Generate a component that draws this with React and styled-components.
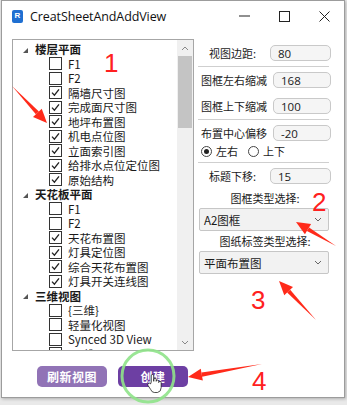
import styled, { createGlobalStyle } from 'styled-components'

const GlobalStyle = createGlobalStyle`
  html, body {
    margin: 0;
    padding: 0;
    background: #e9e9e9;
  }
  #root {
    width: 347px;
    height: 405px;
    position: relative;
    overflow: hidden;
  }
`

const CJK = `"Noto Sans CJK SC", "Noto Sans", sans-serif`

const Window = styled.div`
  position: relative;
  margin-left: 1px;
  width: 342px;
  height: 396px;
  background: #ffffff;
  border: 1px solid #9c9c9c;
  box-shadow: 1px 1px 3px rgba(0, 0, 0, 0.25);
  display: flex;
  flex-direction: column;
  font-family: ${CJK};
  color: #1a1a1a;
`

const TitleBar = styled.div`
  height: 30px;
  display: flex;
  align-items: center;
  padding-left: 10px;
  gap: 7px;
`

const AppIcon = styled.div`
  width: 11px;
  height: 13px;
  border-radius: 2px;
  background: #1f6fd1;
  color: white;
  font: bold 8px "Liberation Sans", sans-serif;
  display: flex;
  align-items: flex-start;
  justify-content: center;
  padding-top: 1px;
  box-sizing: border-box;
`

const Title = styled.div`
  font-family: "Open Sans", "Noto Sans", sans-serif;
  font-size: 12.5px;
  color: #111;
  flex: 1;
  letter-spacing: -0.1px;
`

const Controls = styled.div`
  display: flex;
  align-items: center;
`

const Ctl = styled.div`
  width: 40px;
  height: 30px;
  display: flex;
  align-items: center;
  justify-content: center;
`

const Body = styled.div`
  display: flex;
  padding: 8px 0 0 10px;
  gap: 3px;
`

const LeftCol = styled.div`
  display: flex;
  flex-direction: column;
`

const Tree = styled.div`
  width: 180px;
  height: 310px;
  border: 1px solid #a6a6a6;
  display: flex;
  overflow: hidden;
`

const TreeList = styled.div`
  flex: 1;
  padding-top: 2px;
  overflow: hidden;
`

const Row = styled.div`
  height: 14.5px;
  display: flex;
  align-items: center;
  font-size: 11.5px;
  white-space: nowrap;
  padding-left: ${p => (p.$group ? 10 : 36)}px;
  font-weight: ${p => (p.$group ? 700 : 400)};
  gap: ${p => (p.$group ? 7 : 6)}px;
`

const Expander = styled.span`
  width: 0;
  height: 0;
  border-left: 5px solid transparent;
  border-bottom: 5px solid #555;
  margin-top: 2px;
`

const Box = styled.span`
  width: 11px;
  height: 11px;
  border: 1px solid #333;
  background: #fff;
  display: flex;
  align-items: center;
  justify-content: center;
  flex: none;
`

const Scrollbar = styled.div`
  width: 16px;
  background: #f0f0f0;
  display: flex;
  flex-direction: column;
  align-items: center;
`

const Arrow = styled.div`
  height: 16px;
  display: flex;
  align-items: center;
  justify-content: center;
`

const Thumb = styled.div`
  width: 14px;
  height: 72px;
  background: #c4c4c4;
`

const Track = styled.div`
  flex: 1;
`

const ButtonRow = styled.div`
  display: flex;
  gap: 11px;
  padding-left: 25px;
  margin-top: 15px;
`

const Button = styled.div`
  width: 70px;
  height: 21px;
  border-radius: 5px;
  background: ${p => (p.$primary ? '#6d3fa3' : '#9173b6')};
  color: #fff;
  font-size: 12px;
  font-weight: 700;
  display: flex;
  align-items: center;
  justify-content: center;
  letter-spacing: 0.5px;
`

const RightCol = styled.div`
  width: 136px;
  display: flex;
  flex-direction: column;
  padding-top: 1px;
`

const Field = styled.div`
  display: flex;
  align-items: center;
  height: 26px;
  padding-left: ${p => p.$indent || 4}px;
  gap: ${p => p.$gap || 6}px;
`

const Label = styled.span`
  font-size: 11px;
  white-space: nowrap;
`

const Input = styled.div`
  margin-left: auto;
  width: 61px;
  height: 16px;
  border: 1px solid #c9c9c9;
  border-radius: 5px;
  background: #f5f5f5;
  font-family: "Open Sans", "Noto Sans", sans-serif;
  font-size: 11.5px;
  display: flex;
  align-items: center;
  padding-left: 7px;
  box-sizing: border-box;
  margin-right: 2px;
`

const Separator = styled.div`
  height: 1px;
  background: #cfcfcf;
  margin: 0 4px 0 1px;
`

const RadioRow = styled.div`
  display: flex;
  align-items: center;
  height: 16px;
  padding-left: 4px;
  gap: 4px;
  font-size: 11px;
  margin-top: -3px;
  margin-bottom: 3px;
`

const Radio = styled.span`
  width: 9px;
  height: 9px;
  border-radius: 50%;
  border: 1px solid #444;
  display: inline-flex;
  align-items: center;
  justify-content: center;
  margin-left: ${p => (p.$gapBefore ? 6 : 0)}px;
  &::after {
    content: '';
    width: 5px;
    height: 5px;
    border-radius: 50%;
    background: ${p => (p.$on ? '#222' : 'transparent')};
  }
`

const Caption = styled.div`
  font-size: 11px;
  text-align: center;
  height: 16px;
  line-height: 16px;
  margin-top: ${p => p.$mt || 0}px;
`

const Select = styled.div`
  height: 21px;
  margin: 2px 4px 0 2px;
  border: 1px solid #c6c6c6;
  border-radius: 2px;
  background: #f2f2f2;
  display: flex;
  align-items: center;
  padding: 0 6px 0 4px;
  font-size: 11.5px;
  justify-content: space-between;
`

const Overlay = styled.svg`
  position: absolute;
  left: 0;
  top: 0;
  pointer-events: none;
`

const Mark = styled.span`
  position: absolute;
  left: ${p => p.$x}px;
  top: ${p => p.$y}px;
  color: #ff2020;
  font-family: "Liberation Sans", sans-serif;
  font-size: 26px;
  line-height: 1;
`

const Check = () => (
  <svg width="9" height="9" viewBox="0 0 9 9">
    <path d="M1 4.6 L3.4 7.2 L8 1.4" fill="none" stroke="#222" strokeWidth="1.3" />
  </svg>
)

const groups = [
  {
    name: '楼层平面',
    items: [
      ['F1', false], ['F2', false], ['隔墙尺寸图', true], ['完成面尺寸图', true],
      ['地坪布置图', true], ['机电点位图', true], ['立面索引图', true],
      ['给排水点位定位图', true], ['原始结构', true],
    ],
  },
  {
    name: '天花板平面',
    items: [
      ['F1', false], ['F2', false], ['天花布置图', true], ['灯具定位图', true],
      ['综合天花布置图', true], ['灯具开关连线图', true],
    ],
  },
  {
    name: '三维视图',
    items: [
      ['{三维}', false], ['轻量化视图', false], ['Synced 3D View', false], ['{三维 - Lennox}', false],
    ],
  },
]

const Chevron = () => (
  <svg width="8" height="5" viewBox="0 0 8 5">
    <path d="M1 1 L4 4 L7 1" fill="none" stroke="#666" strokeWidth="1" />
  </svg>
)

function Arrowhead({ x1, y1, x2, y2 }) {
  const dx = x2 - x1
  const dy = y2 - y1
  const len = Math.hypot(dx, dy)
  const ux = dx / len
  const uy = dy / len
  const bx = x2 - ux * 14
  const by = y2 - uy * 14
  const px = -uy * 6
  const py = ux * 6
  return (
    <g fill="#ff2a1a">
      <polygon points={`${x1},${y1} ${bx + px * 0.35},${by + py * 0.35} ${bx - px * 0.35},${by - py * 0.35}`} />
      <polygon points={`${x2},${y2} ${bx + px},${by + py} ${bx - px},${by - py}`} />
    </g>
  )
}

export default function App() {
  return (
    <>
      <GlobalStyle />
      <Window>
        <TitleBar>
          <AppIcon>R</AppIcon>
          <Title>CreatSheetAndAddView</Title>
          <Controls>
            <Ctl>
              <svg width="11" height="2"><rect width="11" height="1" y="0.5" fill="#222" /></svg>
            </Ctl>
            <Ctl>
              <svg width="11" height="11"><rect x="0.5" y="0.5" width="10" height="10" fill="none" stroke="#222" /></svg>
            </Ctl>
            <Ctl>
              <svg width="11" height="11"><path d="M0.5 0.5 L10.5 10.5 M10.5 0.5 L0.5 10.5" stroke="#222" /></svg>
            </Ctl>
          </Controls>
        </TitleBar>
        <Body>
          <LeftCol>
            <Tree>
              <TreeList>
                {groups.map(g => (
                  <div key={g.name}>
                    <Row $group>
                      <Expander />
                      {g.name}
                    </Row>
                    {g.items.map(([label, on], i) => (
                      <Row key={i}>
                        <Box>{on && <Check />}</Box>
                        {label}
                      </Row>
                    ))}
                  </div>
                ))}
              </TreeList>
              <Scrollbar>
                <Arrow>
                  <svg width="8" height="5" viewBox="0 0 8 5"><path d="M1 4 L4 1 L7 4" fill="none" stroke="#888" /></svg>
                </Arrow>
                <Thumb />
                <Track />
                <Arrow>
                  <svg width="8" height="5" viewBox="0 0 8 5"><path d="M1 1 L4 4 L7 1" fill="none" stroke="#888" /></svg>
                </Arrow>
              </Scrollbar>
            </Tree>
            <ButtonRow>
              <Button>刷新视图</Button>
              <Button $primary>创建</Button>
            </ButtonRow>
          </LeftCol>
          <RightCol>
            <Field $indent={12} $gap={8}>
              <Label>视图边距:</Label>
              <Input>80</Input>
            </Field>
            <Separator />
            <Field>
              <Label>图框左右缩减</Label>
              <Input>168</Input>
            </Field>
            <Field>
              <Label>图框上下缩减</Label>
              <Input>100</Input>
            </Field>
            <Separator />
            <Field>
              <Label>布置中心偏移</Label>
              <Input>-20</Input>
            </Field>
            <RadioRow>
              <Radio $on /> 左右
              <Radio $gapBefore /> 上下
            </RadioRow>
            <Separator />
            <Field $indent={12}>
              <Label>标题下移:</Label>
              <Input>15</Input>
            </Field>
            <Caption $mt={1}>图框类型选择:</Caption>
            <Select>
              <span>A2图框</span>
              <Chevron />
            </Select>
            <Caption $mt={2}>图纸标签类型选择:</Caption>
            <Select>
              <span>平面布置图</span>
              <Chevron />
            </Select>
          </RightCol>
        </Body>
      </Window>
      <Overlay width="347" height="405" viewBox="0 0 347 405">
        <Arrowhead x1={12} y1={86} x2={47} y2={123} />
        <Arrowhead x1={336} y1={246} x2={296} y2={222} />
        <Arrowhead x1={316} y1={320} x2={279} y2={281} />
        <Arrowhead x1={262} y1={364} x2={188} y2={377} />
        <circle cx="148" cy="376" r="26" fill="none" stroke="#8fe38a" strokeWidth="3" opacity="0.9" />
        <g transform="translate(150 377) scale(0.62)">
          <path d="M2 8 l0 -10 a2 2 0 0 1 4 0 l0 9 l0 -3 a2 2 0 0 1 4 0 l0 3 a2 2 0 0 1 4 0 l0 2 a2 2 0 0 1 4 0 l0 8 q0 7 -6 8 l-5 0 q-4 0 -6 -5 l-4 -6 a2 2 0 0 1 4 -3 z" fill="#fff" stroke="#111" strokeWidth="1.2" />
        </g>
      </Overlay>
      <Mark $x={104} $y={50}>1</Mark>
      <Mark $x={312} $y={189}>2</Mark>
      <Mark $x={251} $y={287}>3</Mark>
      <Mark $x={252} $y={368}>4</Mark>
    </>
  )
}
